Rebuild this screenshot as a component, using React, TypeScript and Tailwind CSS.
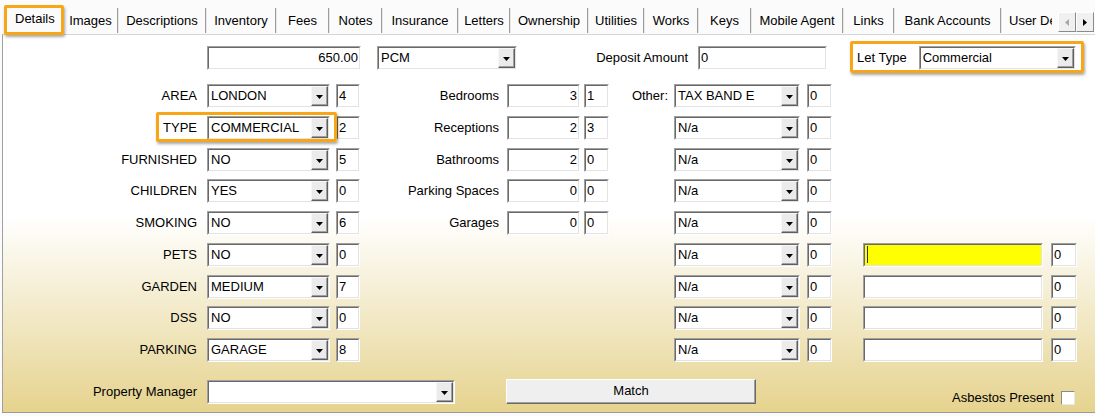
import type { ReactNode } from 'react';

// classic sunken edit box (outer + inner bevel)
function Edit({ value = '', className = '', right = false, yellow = false, caret = false }: {
    value?: string; className?: string; right?: boolean; yellow?: boolean; caret?: boolean;
}) {
    return (
        <div className={`h-[24px] shrink-0 border border-t-[#a0a0a0] border-l-[#a0a0a0] border-r-white border-b-white ${className}`}>
            <div className={`flex h-full items-center border border-t-[#696969] border-l-[#696969] border-r-[#e3e3e3] border-b-[#e3e3e3] ${yellow ? 'bg-[#ffff00]' : 'bg-white'} ${right ? 'justify-end pr-[1px]' : 'pl-[1px]'}`}>
                {caret && <span className="ml-[1px] h-[17px] w-px bg-[#30305a]" />}
                <span className="whitespace-nowrap leading-[16px]">{value}</span>
            </div>
        </div>
    );
}

function Combo({ value = '', className = '' }: { value?: string; className?: string }) {
    return (
        <div className={`h-[24px] shrink-0 border border-t-[#a0a0a0] border-l-[#a0a0a0] border-r-white border-b-white ${className}`}>
            <div className="flex h-full border border-t-[#696969] border-l-[#696969] border-r-[#e3e3e3] border-b-[#e3e3e3] bg-white">
                <span className="flex-1 self-center overflow-hidden whitespace-nowrap pl-[2px] leading-[16px]">{value}</span>
                <span className="flex h-full w-[17px] items-center justify-center border border-t-[#f7f7f7] border-l-[#f7f7f7] border-r-[#5e5e5e] border-b-[#5e5e5e] bg-[#ebebeb] shadow-[inset_-1px_-1px_0_#a0a0a0]">
                    <svg width="7" height="4" viewBox="0 0 7 4" className="mt-[2px]">
                        <path d="M0 0h7L3.5 4z" fill="#000" />
                    </svg>
                </span>
            </div>
        </div>
    );
}

// orange callout box drawn over a group
function Highlight({ className }: { className: string }) {
    return (
        <div className={`pointer-events-none absolute rounded-[2px] border-[3px] border-[#f7a617] shadow-[1px_2px_3px_rgba(0,0,0,0.35)] ${className}`} />
    );
}

function Label({ children, className = '' }: { children: ReactNode; className?: string }) {
    return <span className={`whitespace-nowrap leading-[16px] ${className}`}>{children}</span>;
}

const tabs = [
    { label: 'Images', w: 'w-[53px]' },
    { label: 'Descriptions', w: 'w-[86px]' },
    { label: 'Inventory', w: 'w-[68px]' },
    { label: 'Fees', w: 'w-[51px]' },
    { label: 'Notes', w: 'w-[51px]' },
    { label: 'Insurance', w: 'w-[74px]' },
    { label: 'Letters', w: 'w-[50px]' },
    { label: 'Ownership', w: 'w-[76px]' },
    { label: 'Utilities', w: 'w-[54px]' },
    { label: 'Works', w: 'w-[52px]' },
    { label: 'Keys', w: 'w-[51px]' },
    { label: 'Mobile Agent', w: 'w-[90px]' },
    { label: 'Links', w: 'w-[49px]' },
    { label: 'Bank Accounts', w: 'w-[105px]' },
];

const leftRows = [
    ['AREA', 'LONDON', '4'],
    ['TYPE', 'COMMERCIAL', '2'],
    ['FURNISHED', 'NO', '5'],
    ['CHILDREN', 'YES', '0'],
    ['SMOKING', 'NO', '6'],
    ['PETS', 'NO', '0'],
    ['GARDEN', 'MEDIUM', '7'],
    ['DSS', 'NO', '0'],
    ['PARKING', 'GARAGE', '8'],
];

const midRows = [
    ['Bedrooms', '3', '1'],
    ['Receptions', '2', '3'],
    ['Bathrooms', '2', '0'],
    ['Parking Spaces', '0', '0'],
    ['Garages', '0', '0'],
];

function ArrowBtn({ dir, disabled }: { dir: 'l' | 'r'; disabled?: boolean }) {
    return (
        <div className="flex h-[20px] w-[18px] items-center justify-center border border-t-white border-l-white border-r-[#8a8a8a] border-b-[#8a8a8a] bg-[#f0f0f0]">
            <svg width="4" height="7" viewBox="0 0 4 7">
                <path d={dir === 'l' ? 'M4 0v7L0 3.5z' : 'M0 0v7l4-3.5z'} fill={disabled ? '#a8a8a8' : '#000'} />
            </svg>
        </div>
    );
}

export default function App() {
    return (
        <div className="h-[416px] w-[1095px] overflow-hidden bg-[#fbfbfb] font-['Liberation_Sans',Arial,sans-serif] text-[13px] text-black">
            {/* Tab strip */}
            <div className="flex h-[34px] items-end">
                <div className="relative h-[34px] w-[64px] shrink-0 pl-[15px] pt-[11px] leading-[16px]">
                    Details
                    <Highlight className="left-[4px] right-0 top-[5px] -bottom-[1px]" />
                </div>
                {tabs.map((t, i) => (
                    <div key={t.label} className="flex items-end">
                        {i > 0 && <div className="mb-[1px] h-[25px] w-[2px] border-l border-l-[#9c9c9c] border-r border-r-[#e8e8e8]" />}
                        <div className={`flex h-[26px] shrink-0 items-center justify-center leading-[16px] ${t.w}`}>{t.label}</div>
                    </div>
                ))}
                <div className="mb-[1px] h-[25px] w-[2px] border-l border-l-[#9c9c9c] border-r border-r-[#e8e8e8]" />
                <div className="flex h-[26px] w-[50px] shrink-0 items-center overflow-hidden whitespace-nowrap pl-[7px] leading-[16px]">User Defined</div>
                <div className="mb-[2px] ml-[6px] flex">
                    <ArrowBtn dir="l" disabled />
                    <ArrowBtn dir="r" />
                </div>
            </div>

            {/* Details panel */}
            <div className="ml-[2px] h-[379px] border-t border-t-[#d6d6d6] border-l border-l-[#a0a0a0] border-b border-b-[#9a9a9a] bg-linear-to-b from-white from-48% to-[#e6d38e]">
                {/* Rent / deposit / let type */}
                <div className="mt-[11px] flex h-[24px] items-start">
                    <Edit className="ml-[204px] w-[154px]" right value="650.00" />
                    <Combo className="ml-[16px] w-[140px]" value="PCM" />
                    <div className="flex h-[24px] w-[171px] shrink-0 items-center justify-end">
                        <Label>Deposit Amount</Label>
                    </div>
                    <Edit className="ml-[10px] w-[129px]" value="0" />
                    <div className="relative ml-[30px] flex items-center gap-[12px]">
                        <Label>Let Type</Label>
                        <Combo className="w-[157px]" value="Commercial" />
                        <Highlight className="-left-[7px] -right-[8px] -top-[5px] -bottom-[3px]" />
                    </div>
                </div>

                {/* Attribute rows */}
                <div className="mt-[14px]">
                    {leftRows.map(([label, value, code], i) => {
                        const mid = midRows[i];
                        return (
                            <div key={label} className="flex h-[31.75px] items-start">
                                <div className="flex w-[327px] shrink-0 items-center justify-end gap-[10px]">
                                    {i === 1 ? (
                                        <div className="relative flex items-center gap-[10px]">
                                            <Label>{label}</Label>
                                            <Combo className="w-[123px]" value={value} />
                                            <Highlight className="-left-[7px] -right-[7px] -top-[4px] -bottom-[2px]" />
                                        </div>
                                    ) : (
                                        <>
                                            <Label>{label}</Label>
                                            <Combo className="w-[123px]" value={value} />
                                        </>
                                    )}
                                </div>
                                <Edit className="ml-[6px] w-[24px]" value={code} />

                                {mid ? (
                                    <>
                                        <div className="flex h-[24px] w-[139px] shrink-0 items-center justify-end">
                                            <Label>{mid[0]}</Label>
                                        </div>
                                        <Edit className="ml-[8px] w-[73px]" right value={mid[1]} />
                                        <Edit className="ml-[4px] w-[25px]" value={mid[2]} />
                                    </>
                                ) : (
                                    <div className="w-[249px] shrink-0" />
                                )}

                                <div className="flex h-[24px] w-[59px] shrink-0 items-center justify-end">
                                    {i === 0 && <Label>Other:</Label>}
                                </div>
                                <Combo className="ml-[6px] w-[126px]" value={i === 0 ? 'TAX BAND E' : 'N/a'} />
                                <Edit className="ml-[7px] w-[25px]" value="0" />

                                {i >= 5 && (
                                    <>
                                        <Edit className="ml-[31px] w-[180px]" yellow={i === 5} caret={i === 5} />
                                        <Edit className="ml-[8px] w-[26px]" value="0" />
                                    </>
                                )}
                            </div>
                        );
                    })}
                </div>

                {/* Footer row */}
                <div className="mt-[10px] flex items-start">
                    <div className="flex h-[24px] w-[194px] shrink-0 items-center justify-end">
                        <Label>Property Manager</Label>
                    </div>
                    <Combo className="ml-[10px] w-[248px]" />
                    <button className="-mt-[1px] ml-[51px] h-[25px] w-[250px] shrink-0 border border-t-white border-l-white border-r-[#696969] border-b-[#696969] bg-[#efefef] leading-[16px] shadow-[inset_-1px_-1px_0_#a0a0a0]">
                        Match
                    </button>
                    <div className="ml-auto mr-[20px] mt-[10px] flex items-center gap-[7px]">
                        <Label>Asbestos Present</Label>
                        <div className="h-[14px] w-[14px] border border-t-[#8a8a8a] border-l-[#8a8a8a] border-r-[#e8e8e8] border-b-[#e8e8e8] bg-white" />
                    </div>
                </div>
            </div>
        </div>
    );
}
